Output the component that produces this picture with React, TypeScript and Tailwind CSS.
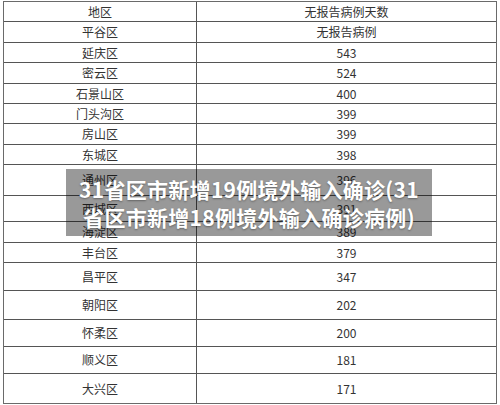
const rows: { name: string; value: string; h: string }[] = [
  { name: "地区", value: "无报告病例天数", h: "h-[20px]" },
  { name: "平谷区", value: "无报告病例", h: "h-[21px]" },
  { name: "延庆区", value: "543", h: "h-[20px]" },
  { name: "密云区", value: "524", h: "h-[21px]" },
  { name: "石景山区", value: "400", h: "h-[20px]" },
  { name: "门头沟区", value: "399", h: "h-[20px]" },
  { name: "房山区", value: "399", h: "h-[21px]" },
  { name: "东城区", value: "398", h: "h-[20px]" },
  { name: "通州区", value: "396", h: "h-[31px]" },
  { name: "西城区", value: "391", h: "h-[26px]" },
  { name: "海淀区", value: "389", h: "h-[21px]" },
  { name: "丰台区", value: "379", h: "h-[20px]" },
  { name: "昌平区", value: "347", h: "h-[28px]" },
  { name: "朝阳区", value: "202", h: "h-[29px]" },
  { name: "怀柔区", value: "200", h: "h-[27px]" },
  { name: "顺义区", value: "181", h: "h-[27px]" },
  { name: "大兴区", value: "171", h: "h-[29px]" },
];

export default function App() {
  return (
    <div
      className="relative w-[500px] h-[405px] bg-white overflow-hidden pt-[1px] pl-[3px]"
      style={{ fontFamily: '"Noto Sans CJK SC", "Noto Sans", sans-serif' }}
    >
      <div className="w-[494px] border border-[#6a6a6a] text-[12px] text-[#333]">
        {rows.map((r, i) => (
          <div
            key={i}
            className={`grid grid-cols-[193px_1fr] ${r.h} ${i < rows.length - 1 ? "border-b border-[#555]" : ""}`}
          >
            <div className="flex items-center justify-center border-r border-[#555]">{r.name}</div>
            <div className="flex items-center justify-center">{r.value}</div>
          </div>
        ))}
      </div>

      <div className="absolute left-[66px] top-[169px] w-[366px] h-[67px] bg-black/40 flex flex-col items-center justify-center">
        <p className="text-white font-bold text-[21px] leading-[28px] tracking-[0.3px] [text-shadow:0_1px_2px_rgba(0,0,0,0.35)]">
          31省区市新增19例境外输入确诊(31
        </p>
        <p className="text-white font-bold text-[21px] leading-[28px] tracking-[0.3px] [text-shadow:0_1px_2px_rgba(0,0,0,0.35)]">
          省区市新增18例境外输入确诊病例)
        </p>
      </div>
    </div>
  );
}
